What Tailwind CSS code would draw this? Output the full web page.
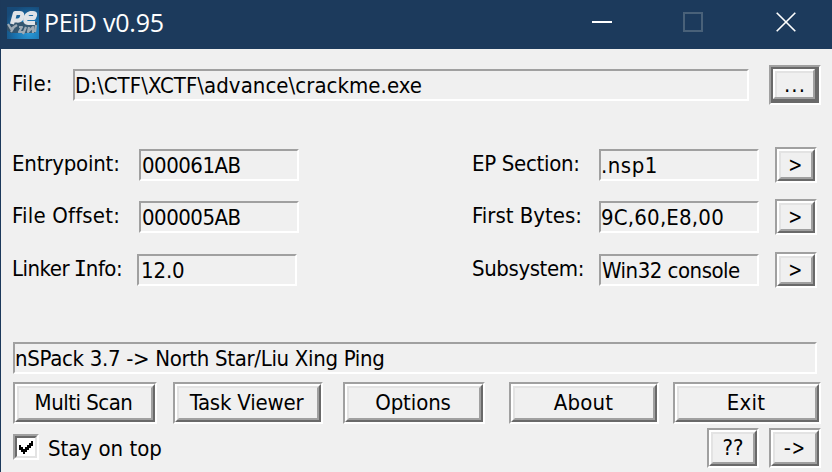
<!DOCTYPE html>
<html lang="en">
<head>
<meta charset="utf-8">
<title>PEiD v0.95</title>
<script src="https://cdn.jsdelivr.net/npm/@tailwindcss/browser@4"></script>
</head>
<body class="h-[472px] w-[832px] overflow-hidden bg-[#f0f0f0] text-[22px] whitespace-nowrap text-black font-['DejaVu_Sans_Condensed','DejaVu_Sans',sans-serif]">
<div class="flex h-[472px] w-[832px] flex-col border-l border-[#1c395b]">
  <header class="flex h-[49px] shrink-0 items-center bg-[#1c3a5c] pl-1.5 text-white">
    <svg class="mt-[-3px] h-8 w-8" viewBox="0 0 32 32">
      <defs>
        <radialGradient id="blue" cx="70%" cy="80%" r="85%"><stop offset="0" stop-color="#2a9ad8"/><stop offset=".55" stop-color="#1870ac"/><stop offset="1" stop-color="#174a78"/></radialGradient>
      </defs>
      <rect width="32" height="32" fill="url(#blue)"/>
      <path d="M0 18h3l2-3h25v5l-2 6H4l-4-3z" fill="#3b4d5e" opacity=".8"/>
      <g fill="none" stroke-linejoin="round">
        <path d="M5 17 8 6h5q3 0 2 4t-5 3.500H7" stroke="#dfe3e7" stroke-width="4.2"/>
        <path d="M20 11h7q3-5-1-5h-3q-4 1-5 6 0 4 3 4h7" stroke="#dfe3e7" stroke-width="3.8"/>
        <path d="m1 17 3 5 6-4M7 20l-3 5M12 20h3l-3 5h4M19 20l-3 7M22 20l-1 5 5-5v6M29 18l-1 7" stroke-width="2.2" stroke="#9eaab4"/>
      </g>
    </svg>
    <h1 class="mt-[-6px] ml-[5px] w-[160px] font-['Open_Sans',sans-serif] text-[25px] leading-[36px] tracking-[-0.2px]">PEiD v0.95</h1>
    <div class="mt-[-5px] ml-auto flex pr-9">
      <svg class="mr-[71px] h-5 w-5" viewBox="0 0 20 20"><path d="M0 10h20" stroke="#fff" stroke-width="2"/></svg>
      <svg class="mr-[73px] h-5 w-5" viewBox="0 0 20 20"><path d="M1 1h18v18H1z" fill="none" stroke="#496179" stroke-width="2"/></svg>
      <svg class="h-5 w-5" viewBox="0 0 20 20"><path d="m.7.7 18.6 18.6M19.3.7.7 19.3" stroke="#fff" stroke-width="1.6"/></svg>
    </div>
  </header>

  <main class="flex flex-1 flex-col pl-3">
    <div class="flex h-[100px] pt-4">
      <div class="-ml-px mt-[3px] w-[61px] leading-[32px] tracking-[.2px]">File:</div>
      <div class="mt-1 h-8 w-[676px] border-2 border-t-[#a0a0a0] border-r-white border-b-white border-l-[#a0a0a0] leading-[30px] tracking-[.05px]">D:\CTF\XCTF\advance\crackme.exe</div>
      <button class="ml-5 block h-10 w-[52px] border-2 border-t-[#a0a0a0] border-r-white border-b-white border-l-[#a0a0a0]">
        <span class="block h-full border-2 border-r-4 border-b-4 border-[#696969]">
          <span class="block h-full border-2 border-t-white border-r-[#a0a0a0] border-b-[#a0a0a0] border-l-white">
            <span class="block h-full border-t-2 border-l-2 border-[#e3e3e3] text-center leading-[23px] tracking-[1px]">...</span>
          </span>
        </span>
      </button>
    </div>

    <div class="flex h-[193px]">
      <div class="w-[460px]">
        <div class="flex h-[52px]">
          <div class="-ml-px mt-[-1px] w-[127px] leading-[32px] tracking-[-.2px]">Entrypoint:</div>
          <div class="h-8 w-40 border-2 border-t-[#a0a0a0] border-r-white border-b-white border-l-[#a0a0a0] pl-px leading-[30px] tracking-[-.5px]">000061AB</div>
        </div>
        <div class="flex h-[53px]">
          <div class="-ml-px mt-[-1px] w-[127px] leading-[32px] tracking-[.2px]">File Offset:</div>
          <div class="h-8 w-40 border-2 border-t-[#a0a0a0] border-r-white border-b-white border-l-[#a0a0a0] pl-px leading-[30px] tracking-[-.5px]">000005AB</div>
        </div>
        <div class="flex h-8">
          <div class="-ml-px mt-[-1px] w-[125px] leading-[32px] tracking-[-.5px]">Linker <span class="inline-block w-[11px] font-['DejaVu_Sans_Mono',monospace]"><span class="-ml-px">I</span></span>nfo:</div>
          <div class="h-8 w-40 border-2 border-t-[#a0a0a0] border-r-white border-b-white border-l-[#a0a0a0] pl-[2px] leading-[30px] tracking-[-.15px]">12.0</div>
        </div>
      </div>
      <div class="w-[350px]">
        <div class="flex h-[52px]">
          <div class="-ml-px mt-[-1px] w-[127px] leading-[32px] tracking-[-.3px]">EP Section:</div>
          <div class="h-8 w-40 border-2 border-t-[#a0a0a0] border-r-white border-b-white border-l-[#a0a0a0] leading-[30px] tracking-[.5px]">.nsp1</div>
          <button class="mt-[-2px] ml-4 block h-9 w-[42px] border-2 border-t-[#a0a0a0] border-r-white border-b-white border-l-[#a0a0a0]"><span class="block h-full border-2 border-t-white border-r-[#696969] border-b-[#696969] border-l-white"><span class="block h-full border-2 border-t-[#e3e3e3] border-r-[#a0a0a0] border-b-[#a0a0a0] border-l-[#e3e3e3] pr-[2px] text-center leading-[24px]"><span class="inline-block scale-x-85">&gt;</span></span></span></button>
        </div>
        <div class="flex h-[53px]">
          <div class="-ml-px mt-[-1px] w-[127px] leading-[32px]">First Bytes:</div>
          <div class="h-8 w-40 border-2 border-t-[#a0a0a0] border-r-white border-b-white border-l-[#a0a0a0] leading-[30px] tracking-[.2px]">9C,60,E8,00</div>
          <button class="mt-[-2px] ml-4 block h-9 w-[42px] border-2 border-t-[#a0a0a0] border-r-white border-b-white border-l-[#a0a0a0]"><span class="block h-full border-2 border-t-white border-r-[#696969] border-b-[#696969] border-l-white"><span class="block h-full border-2 border-t-[#e3e3e3] border-r-[#a0a0a0] border-b-[#a0a0a0] border-l-[#e3e3e3] pr-[2px] text-center leading-[24px]"><span class="inline-block scale-x-85">&gt;</span></span></span></button>
        </div>
        <div class="flex h-9">
          <div class="-ml-px mt-[-1px] w-[127px] leading-[32px] tracking-[-.4px]">Subsystem:</div>
          <div class="h-8 w-40 border-2 border-t-[#a0a0a0] border-r-white border-b-white border-l-[#a0a0a0] pl-px leading-[30px] tracking-[-.5px]">Win32 console</div>
          <button class="mt-[-2px] ml-4 block h-9 w-[42px] border-2 border-t-[#a0a0a0] border-r-white border-b-white border-l-[#a0a0a0]"><span class="block h-full border-2 border-t-white border-r-[#696969] border-b-[#696969] border-l-white"><span class="block h-full border-2 border-t-[#e3e3e3] border-r-[#a0a0a0] border-b-[#a0a0a0] border-l-[#e3e3e3] pr-[2px] text-center leading-[24px]"><span class="inline-block scale-x-85">&gt;</span></span></span></button>
        </div>
      </div>
    </div>

    <div class="h-8 w-[804px] border-2 border-t-[#a0a0a0] border-r-white border-b-white border-l-[#a0a0a0] leading-[30px] tracking-[-.31px]">nSPack 3.7 -&gt; North Star/Liu Xing Ping</div>

    <div class="mt-2 flex h-[42px]">
      <button class="h-[42px] w-[144px] border-2 border-t-[#a0a0a0] border-r-white border-b-white border-l-[#a0a0a0]"><span class="block h-full border-2 border-t-white border-r-[#696969] border-b-[#696969] border-l-white"><span class="block h-full border-2 border-t-[#e3e3e3] border-r-[#a0a0a0] border-b-[#a0a0a0] border-l-[#e3e3e3] pr-[3px] text-center leading-[29px] tracking-[-.5px]">Multi Scan</span></span></button>
      <button class="ml-4 h-[42px] w-[150px] border-2 border-t-[#a0a0a0] border-r-white border-b-white border-l-[#a0a0a0]"><span class="block h-full border-2 border-t-white border-r-[#696969] border-b-[#696969] border-l-white"><span class="block h-full border-2 border-t-[#e3e3e3] border-r-[#a0a0a0] border-b-[#a0a0a0] border-l-[#e3e3e3] pr-[3px] text-center leading-[29px] tracking-[-.2px]">Task Viewer</span></span></button>
      <button class="ml-5 h-[42px] w-[142px] border-2 border-t-[#a0a0a0] border-r-white border-b-white border-l-[#a0a0a0]"><span class="block h-full border-2 border-t-white border-r-[#696969] border-b-[#696969] border-l-white"><span class="block h-full border-2 border-t-[#e3e3e3] border-r-[#a0a0a0] border-b-[#a0a0a0] border-l-[#e3e3e3] pr-[2px] text-center leading-[29px] tracking-[-.1px]">Options</span></span></button>
      <button class="ml-6 h-[42px] w-[150px] border-2 border-t-[#a0a0a0] border-r-white border-b-white border-l-[#a0a0a0]"><span class="block h-full border-2 border-t-white border-r-[#696969] border-b-[#696969] border-l-white"><span class="block h-full border-2 border-t-[#e3e3e3] border-r-[#a0a0a0] border-b-[#a0a0a0] border-l-[#e3e3e3] pr-px text-center leading-[29px] tracking-[.2px]">About</span></span></button>
      <button class="ml-3.5 h-[42px] w-[148px] border-2 border-t-[#a0a0a0] border-r-white border-b-white border-l-[#a0a0a0]"><span class="block h-full border-2 border-t-white border-r-[#696969] border-b-[#696969] border-l-white"><span class="block h-full border-2 border-t-[#e3e3e3] border-r-[#a0a0a0] border-b-[#a0a0a0] border-l-[#e3e3e3] pr-[2px] text-center leading-[29px] tracking-[.3px]">Exit</span></span></button>
    </div>

    <div class="mt-1 flex h-10">
      <label class="flex w-[694px]">
        <span class="mt-1.5 block h-[26px] w-[26px] border-2 border-t-[#a0a0a0] border-r-white border-b-white border-l-[#a0a0a0]">
          <span class="block h-full border-2 border-t-[#696969] border-r-[#e3e3e3] border-b-[#e3e3e3] border-l-[#696969] bg-white">
            <svg class="h-[18px] w-[18px]" viewBox="0 0 18 18"><path d="M2 7h2v2h2v2h2V9h2V7h2V5h2V3h2v5h-2v2h-2v2h-2v2H8v2H6v-2H4v-2H2z"/></svg>
          </span>
        </span>
        <span class="ml-[9px] leading-[42px]">Stay on top</span>
      </label>
      <button class="h-10 w-[52px] border-2 border-t-[#a0a0a0] border-r-white border-b-white border-l-[#a0a0a0]"><span class="block h-full border-2 border-t-white border-r-[#696969] border-b-[#696969] border-l-white"><span class="block h-full border-2 border-t-[#e3e3e3] border-r-[#a0a0a0] border-b-[#a0a0a0] border-l-[#e3e3e3] text-center leading-[28px]">??</span></span></button>
      <button class="ml-2.5 h-10 w-[52px] border-2 border-t-[#a0a0a0] border-r-white border-b-white border-l-[#a0a0a0]"><span class="block h-full border-2 border-t-white border-r-[#696969] border-b-[#696969] border-l-white"><span class="block h-full border-2 border-t-[#e3e3e3] border-r-[#a0a0a0] border-b-[#a0a0a0] border-l-[#e3e3e3] text-center leading-[28px]">-<span class="-ml-px inline-block scale-x-80">&gt;</span></span></span></button>
    </div>
  </main>
</div>
</body>
</html>
